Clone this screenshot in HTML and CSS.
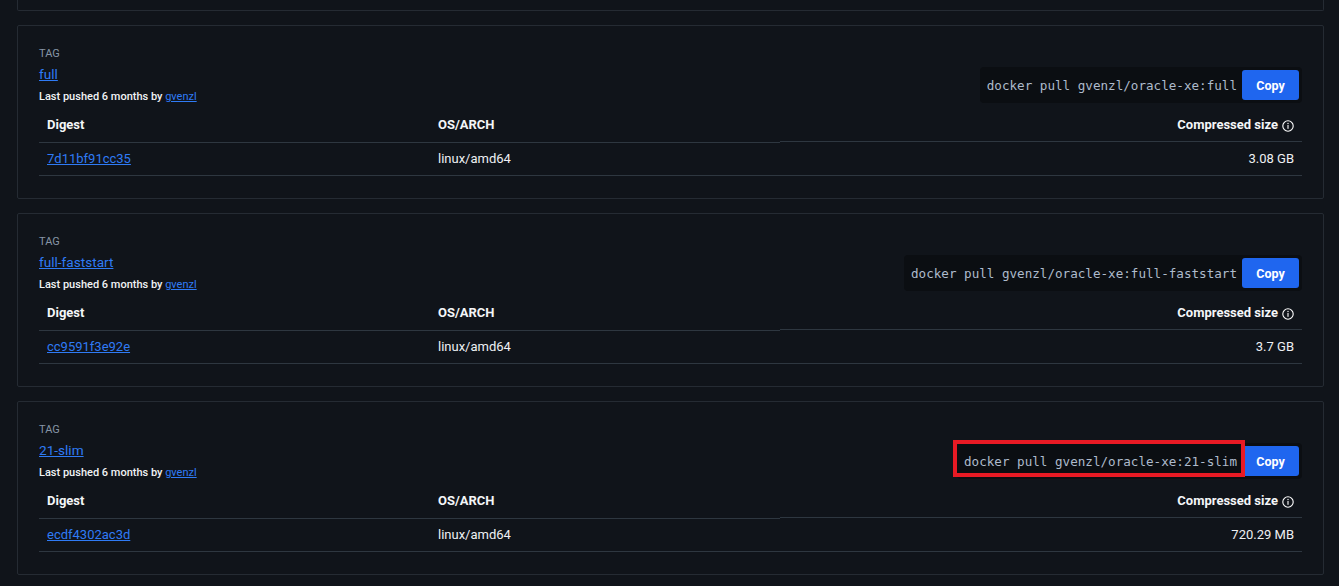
FILE: index.html
```html
<!DOCTYPE html>
<html lang="en">
<head>
<meta charset="utf-8">
<title>Tags</title>
<link rel="stylesheet" href="styles.css">
</head>
<body>
<div class="page">
  <div class="card card-stub"></div>

  <section class="card">
    <div class="tag-head">
      <div class="tag-info">
        <div class="tag-label">TAG</div>
        <a class="tag-name" href="#">full</a>
        <div class="pushed">Last pushed 6 months by <a href="#">gvenzl</a></div>
      </div>
      <div class="cmd">
        <code class="cmd-text">docker pull gvenzl/oracle-xe:full</code>
        <button class="copy">Copy</button>
      </div>
    </div>
    <div class="tbl">
      <div class="th">Digest</div>
      <div class="th">OS/ARCH</div>
      <div class="th th-size">Compressed size <svg class="info" viewBox="0 0 12 12" width="12" height="12"><circle cx="6" cy="6" r="5.2" fill="none" stroke="#fff" stroke-width="1.1"/><rect x="5.45" y="5" width="1.1" height="3.8" fill="#fff"/><circle cx="6" cy="3.5" r="0.7" fill="#fff"/></svg></div>
      <div class="td"><a href="#">7d11bf91cc35</a></div>
      <div class="td">linux/amd64</div>
      <div class="td td-size">3.08 GB</div>
    </div>
  </section>

  <section class="card">
    <div class="tag-head">
      <div class="tag-info">
        <div class="tag-label">TAG</div>
        <a class="tag-name" href="#">full-faststart</a>
        <div class="pushed">Last pushed 6 months by <a href="#">gvenzl</a></div>
      </div>
      <div class="cmd">
        <code class="cmd-text">docker pull gvenzl/oracle-xe:full-faststart</code>
        <button class="copy">Copy</button>
      </div>
    </div>
    <div class="tbl">
      <div class="th">Digest</div>
      <div class="th">OS/ARCH</div>
      <div class="th th-size">Compressed size <svg class="info" viewBox="0 0 12 12" width="12" height="12"><circle cx="6" cy="6" r="5.2" fill="none" stroke="#fff" stroke-width="1.1"/><rect x="5.45" y="5" width="1.1" height="3.8" fill="#fff"/><circle cx="6" cy="3.5" r="0.7" fill="#fff"/></svg></div>
      <div class="td"><a href="#">cc9591f3e92e</a></div>
      <div class="td">linux/amd64</div>
      <div class="td td-size">3.7 GB</div>
    </div>
  </section>

  <section class="card">
    <div class="tag-head">
      <div class="tag-info">
        <div class="tag-label">TAG</div>
        <a class="tag-name" href="#">21-slim</a>
        <div class="pushed">Last pushed 6 months by <a href="#">gvenzl</a></div>
      </div>
      <div class="cmd">
        <code class="cmd-text">docker pull gvenzl/oracle-xe:21-slim</code>
        <button class="copy">Copy</button>
        <span class="highlight"></span>
      </div>
    </div>
    <div class="tbl">
      <div class="th">Digest</div>
      <div class="th">OS/ARCH</div>
      <div class="th th-size">Compressed size <svg class="info" viewBox="0 0 12 12" width="12" height="12"><circle cx="6" cy="6" r="5.2" fill="none" stroke="#fff" stroke-width="1.1"/><rect x="5.45" y="5" width="1.1" height="3.8" fill="#fff"/><circle cx="6" cy="3.5" r="0.7" fill="#fff"/></svg></div>
      <div class="td"><a href="#">ecdf4302ac3d</a></div>
      <div class="td">linux/amd64</div>
      <div class="td td-size">720.29 MB</div>
    </div>
  </section>
</div>
</body>
</html>
```

FILE: styles.css
```css
* { box-sizing: border-box; }

html, body {
  margin: 0;
  padding: 0;
  background: #10141a;
  color: #f1f3f5;
  font-family: Roboto, "Liberation Sans", Arial, sans-serif;
}

.page {
  margin: 0 15px 0 17px;
}

.card {
  border: 1px solid #252b33;
  border-radius: 2px;
  height: 174px;
  margin-bottom: 14px;
  padding: 20px 21px 22px 21px;
  background: #10141a;
}

.card-stub {
  height: 11px;
  border-top: none;
  border-radius: 0 0 2px 2px;
  padding: 0;
}

.tag-head {
  display: flex;
  justify-content: space-between;
  align-items: flex-end;
}

.tag-info {
  display: flex;
  flex-direction: column;
  align-items: flex-start;
}

.tag-label {
  font-size: 11px;
  line-height: 16px;
  color: #8794a6;
}

.tag-name {
  margin-top: 2px;
  font-size: 13.6px;
  line-height: 20px;
  color: #2f7bf5;
  text-decoration: underline;
}

.pushed {
  margin-top: 5px;
  font-size: 11px;
  line-height: 16px;
  font-weight: 500;
  color: #f1f3f5;
}

.pushed a {
  color: #2f7bf5;
  font-weight: 400;
  text-decoration: underline;
}

.cmd {
  position: relative;
  display: flex;
  align-items: center;
  height: 36px;
  margin-bottom: 2px;
  padding: 0 3px 0 7px;
  background: #0b0e12;
  border-radius: 4px;
}

.cmd-text {
  font-family: "DejaVu Sans Mono", "Liberation Mono", monospace;
  font-size: 12.6px;
  color: #aebbcc;
  margin-right: 5px;
  white-space: nowrap;
}

.copy {
  width: 57px;
  height: 30px;
  border: none;
  border-radius: 3px;
  background: #1f66ef;
  color: #ffffff;
  font-family: Roboto, "Liberation Sans", Arial, sans-serif;
  font-size: 12.5px;
  font-weight: 700;
  padding: 0;
}

.highlight {
  position: absolute;
  left: -4px;
  top: -3px;
  width: 292px;
  height: 37px;
  border: 4px solid #e81a24;
  pointer-events: none;
}

.tbl {
  margin-top: 1px;
  display: grid;
  grid-template-columns: 391px 350px 1fr;
}

.th {
  padding: 10px 8px 8px;
  font-size: 13px;
  line-height: 18px;
  font-weight: 700;
  color: #f4f6f8;
  border-bottom: 1px solid #2e3740;
}

.th-size {
  display: flex;
  justify-content: flex-end;
  align-items: center;
  gap: 4px;
  margin-bottom: 1px;
  padding-bottom: 7px;
}

.info {
  display: block;
  margin-top: 1px;
}

.td {
  padding: 7px 8px;
  font-size: 13px;
  line-height: 18px;
  color: #eef0f3;
  border-bottom: 1px solid #2e3740;
}

.td a {
  color: #2f7bf5;
  text-decoration: underline;
}

.td-size {
  text-align: right;
}
```
